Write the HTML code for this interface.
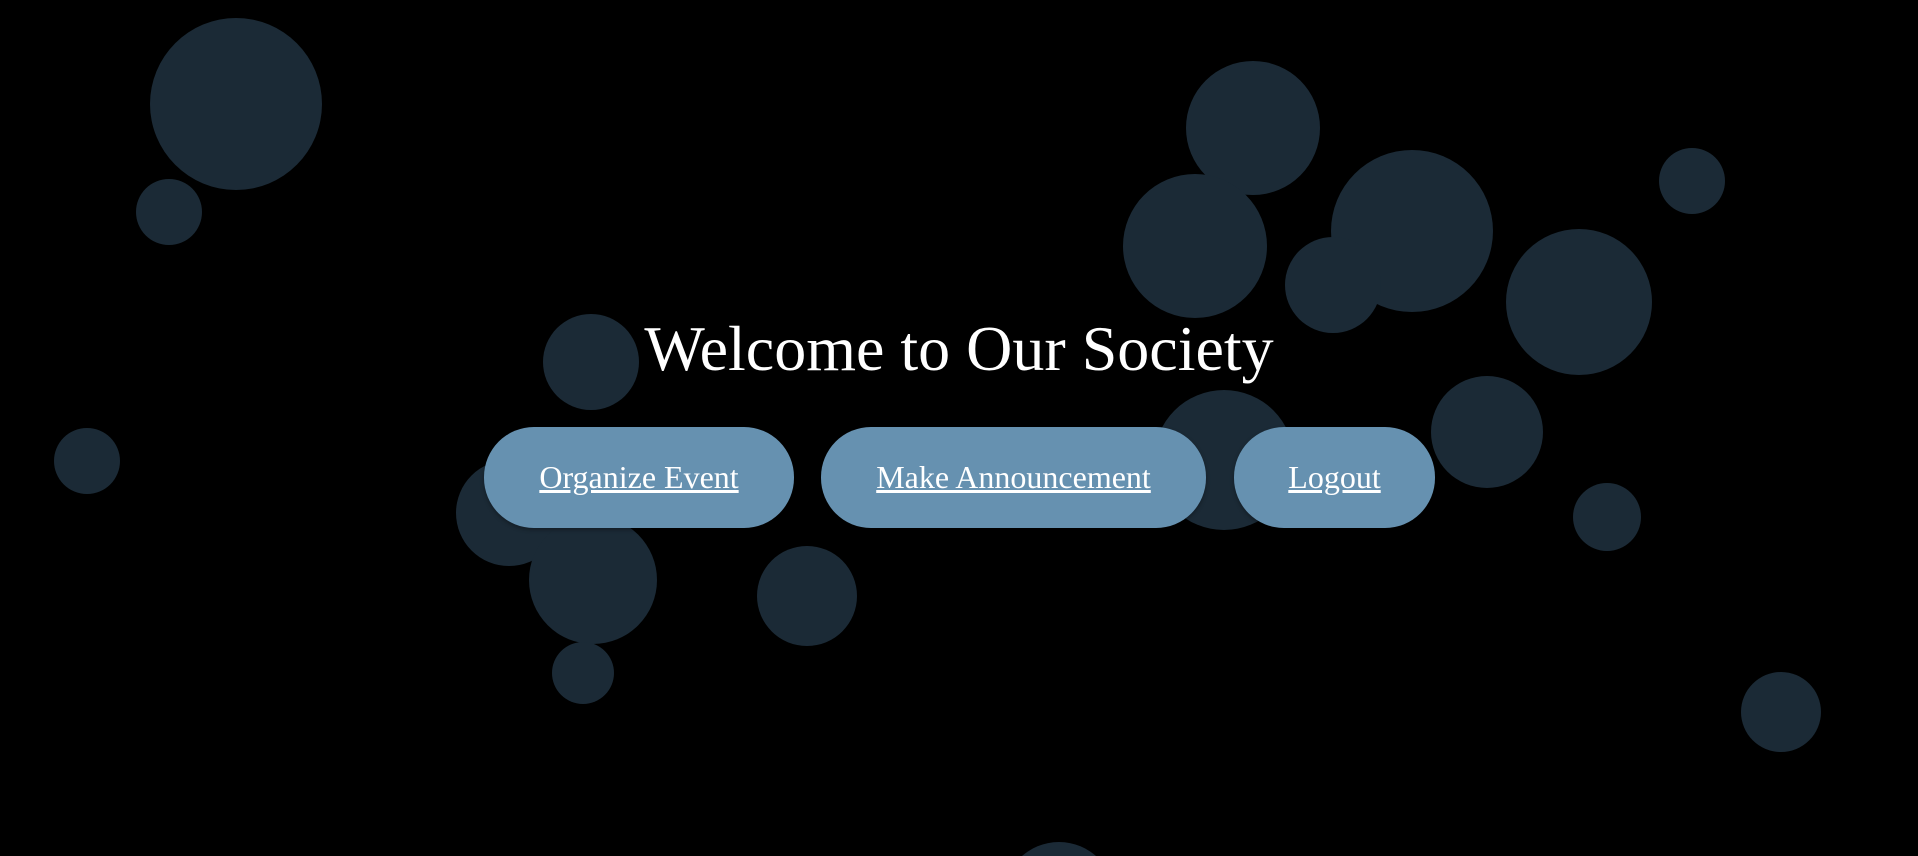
<!DOCTYPE html>
<html><head><meta charset="utf-8"><style>
html,body{margin:0;padding:0;background:#000;width:1918px;height:856px;overflow:hidden;font-family:"Liberation Serif",serif}
svg{position:absolute;left:0;top:0}
h1{position:absolute;left:0;width:1918px;top:309px;margin:0;text-align:center;color:#fff;font-weight:normal;font-size:64px;line-height:80px}
.b{position:absolute;top:427px;height:101px;background:#6691b0;border-radius:50px;color:#fff;font-size:32px;text-decoration:underline;display:flex;align-items:center;justify-content:center;box-shadow:0 2px 4px rgba(0,0,0,.3)}
</style></head><body>
<svg width="1918" height="856" fill="#1b2a36">
<circle cx="236" cy="104" r="86"/><circle cx="169" cy="212" r="33"/><circle cx="1253" cy="128" r="67"/>
<circle cx="1195" cy="246" r="72"/><circle cx="1412" cy="231" r="81"/><circle cx="1333" cy="285" r="48"/>
<circle cx="1692" cy="181" r="33"/><circle cx="1579" cy="302" r="73"/><circle cx="591" cy="362" r="48"/>
<circle cx="87" cy="461" r="33"/><circle cx="1224" cy="460" r="70"/><circle cx="1487" cy="432" r="56"/>
<circle cx="509" cy="513" r="53"/><circle cx="593" cy="580" r="64"/><circle cx="807" cy="596" r="50"/>
<circle cx="583" cy="673" r="31"/><circle cx="1607" cy="517" r="34"/><circle cx="1781" cy="712" r="40"/>
<circle cx="1059" cy="898" r="56"/>
</svg>
<h1>Welcome to Our Society</h1>
<div class="b" style="left:484px;width:310px">Organize Event</div>
<div class="b" style="left:821px;width:385px">Make Announcement</div>
<div class="b" style="left:1234px;width:201px">Logout</div>
</body></html>
